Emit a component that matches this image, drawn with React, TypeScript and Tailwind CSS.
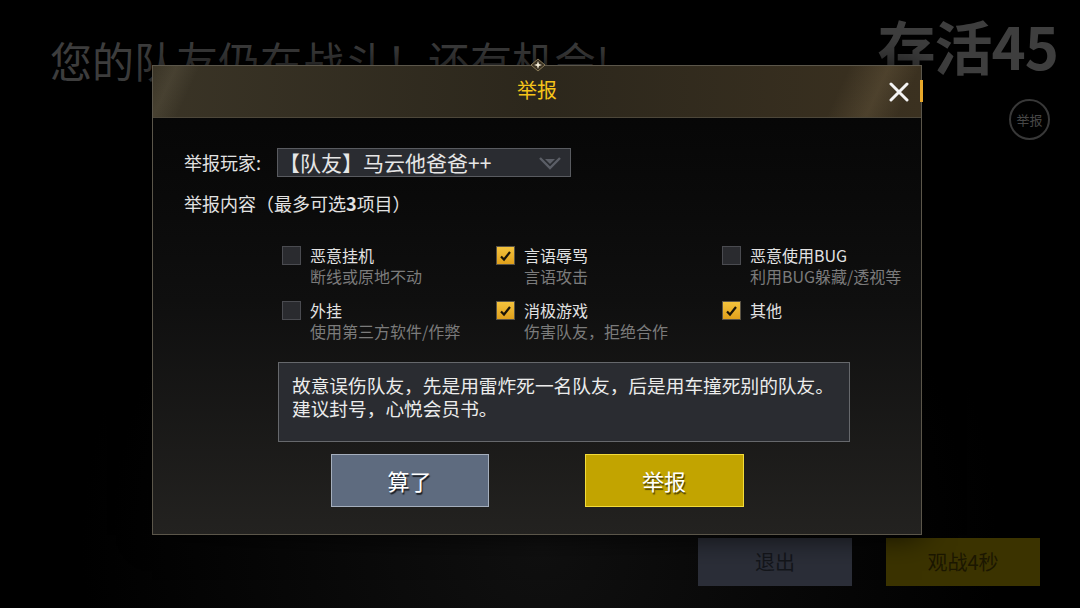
import React from 'react';

type Reason = { title: string; desc?: string; checked: boolean };

const reasons: Reason[] = [
  { title: '恶意挂机', desc: '断线或原地不动', checked: false },
  { title: '言语辱骂', desc: '言语攻击', checked: true },
  { title: '恶意使用BUG', desc: '利用BUG躲藏/透视等', checked: false },
  { title: '外挂', desc: '使用第三方软件/作弊', checked: false },
  { title: '消极游戏', desc: '伤害队友，拒绝合作', checked: true },
  { title: '其他', checked: true },
];

function Checkbox({ checked }: { checked: boolean }) {
  if (!checked) {
    return <div className="w-[19px] h-[19px] shrink-0 bg-[#2a2b2f] border border-[#4a4b50]" />;
  }
  return (
    <div className="w-[19px] h-[19px] shrink-0 border border-[#5a5345] bg-gradient-to-b from-[#f4c33c] to-[#e0a01a] flex items-center justify-center">
      <svg width="13" height="12" viewBox="0 0 13 12">
        <path d="M2 6.5 L5 9.5 L11 2" fill="none" stroke="#1a1408" strokeWidth="2.2" />
      </svg>
    </div>
  );
}

function ReasonItem({ r }: { r: Reason }) {
  return (
    <div className="flex gap-[9px]">
      <Checkbox checked={r.checked} />
      <div className="-mt-[1px]">
        <div className="text-[16px] leading-[21px] text-[#e2e2e2]">{r.title}</div>
        {r.desc && <div className="text-[16px] leading-[20px] text-[#7b7b7b]">{r.desc}</div>}
      </div>
    </div>
  );
}

function ReportDialog() {
  return (
    <div className="absolute left-[152px] top-[65px] w-[770px] h-[470px] border border-[#5b564a] bg-gradient-to-b from-[#050505] via-[#0f0f0f] to-[#232220] shadow-[0_0_30px_rgba(0,0,0,0.8)]">
      {/* header */}
      <div className="relative h-[52px] border-b border-[#4d473a] bg-gradient-to-r from-[#3a3426] via-[#2c271c] to-[#3b3120] flex items-center justify-center pb-[4px]">
        <div className="absolute inset-0 bg-[linear-gradient(115deg,transparent_0%,rgba(255,240,200,0.07)_3%,transparent_6%,transparent_88%,rgba(255,220,160,0.10)_93%,transparent_97%)]" />
        <span className="relative text-[20px] text-[#f5c41a]">举报</span>
        <svg className="absolute right-[12px] top-[16px]" width="20" height="20" viewBox="0 0 20 20">
          <path d="M2 2 L18 18 M18 2 L2 18" stroke="#f4f4f4" strokeWidth="3" strokeLinecap="round" />
        </svg>
        <div className="absolute right-[-2px] top-[14px] w-[3px] h-[22px] bg-[#e8a82a]" />
        <svg className="absolute left-[375px] top-[-9px]" width="20" height="16" viewBox="0 0 20 16">
          <path d="M10 2 L17 8 L10 14 L3 8 Z" fill="#3a3122" stroke="#8b7c5a" strokeWidth="1" />
          <path d="M10 4 L11 7 L14 8 L11 9 L10 12 L9 9 L6 8 L9 7 Z" fill="#f3ecd6" />
        </svg>
      </div>

      {/* body */}
      <div className="pl-[31px] pt-[30px]">
        <div className="flex items-center">
          <span className="w-[93px] text-[18px] text-[#e2e2e2]">举报玩家:</span>
          <div className="w-[294px] h-[29px] bg-[#2a2c31] border border-[#595b60] flex items-center justify-between pl-[1px] pr-[8px]">
            <span className="text-[21px] leading-none text-[#e6e6e6]">【队友】马云他爸爸++</span>
            <svg width="24" height="14" viewBox="0 0 24 14">
              <path d="M2 2 L12 12 L22 2" fill="none" stroke="#5b5e66" strokeWidth="2.4" />
              <path d="M7 3 L12 8 L17 3 Z" fill="#5b5e66" />
            </svg>
          </div>
        </div>
        <div className="mt-[14px] text-[18px] leading-[24px] text-[#e2e2e2]">
          举报内容（最多可选<span className="font-bold">3</span>项目）
        </div>

        <div className="mt-[31px] ml-[98px] grid grid-cols-[214px_226px_200px] gap-y-[15px]">
          {reasons.map((r) => (
            <ReasonItem key={r.title} r={r} />
          ))}
        </div>

        <div className="mt-[21px] ml-[94px] w-[572px] h-[80px] bg-[#2a2c31] border border-[#66686c] px-[13px] pt-[10px] text-[18.7px] leading-[23px] text-[#ececec] whitespace-nowrap">
          故意误伤队友，先是用雷炸死一名队友，后是用车撞死别的队友。
          <br />
          建议封号，心悦会员书。
        </div>

        <div className="mt-[12px] pr-[31px] flex justify-center gap-[96px]">
          <button className="w-[158px] h-[53px] bg-[#5e6b7f] border border-[#a5afbd] text-[22px] text-white [text-shadow:1px_2px_1px_rgba(0,0,0,0.75)]">
            算了
          </button>
          <button className="w-[159px] h-[53px] bg-[#c2a400] border border-[#f3dc3a] text-[22px] text-white [text-shadow:1px_2px_1px_rgba(0,0,0,0.6)]">
            举报
          </button>
        </div>
      </div>
    </div>
  );
}

export default function App() {
  return (
    <div className="relative w-[1080px] h-[608px] overflow-hidden bg-black font-['Noto_Sans_CJK_SC',sans-serif]">
      {/* spectator screen behind the dialog */}
      <div className="h-full flex flex-col bg-[radial-gradient(ellipse_at_50%_90%,#101010_0%,#000_60%)]">
        <div className="flex justify-between items-start">
          <h1 className="ml-[50px] mt-[36px] text-[42px] leading-[48px] font-normal text-[#3d3d3d]">
            您的队友仍在战斗！还有机会!
          </h1>
          <div className="mr-[22px] mt-[10px] text-[58px] leading-[70px] font-bold text-[#3e3e3e] tracking-[-1px]">
            存活45
          </div>
        </div>
        <div className="flex justify-end mr-[30px] mt-[15px]">
          <div className="w-[41px] h-[41px] rounded-full border-2 border-[#383838] flex items-center justify-center text-[13px] text-[#474747]">
            举报
          </div>
        </div>
        <div className="mt-auto mb-[22px] mr-[40px] flex justify-end gap-[34px]">
          <div className="w-[154px] h-[48px] bg-[#2b2e38] flex items-center justify-center text-[20px] text-[#14161b]">
            退出
          </div>
          <div className="w-[154px] h-[48px] bg-[#3b3300] flex items-center justify-center text-[20px] text-[#1b1700]">
            观战4秒
          </div>
        </div>
      </div>

      <ReportDialog />
    </div>
  );
}
